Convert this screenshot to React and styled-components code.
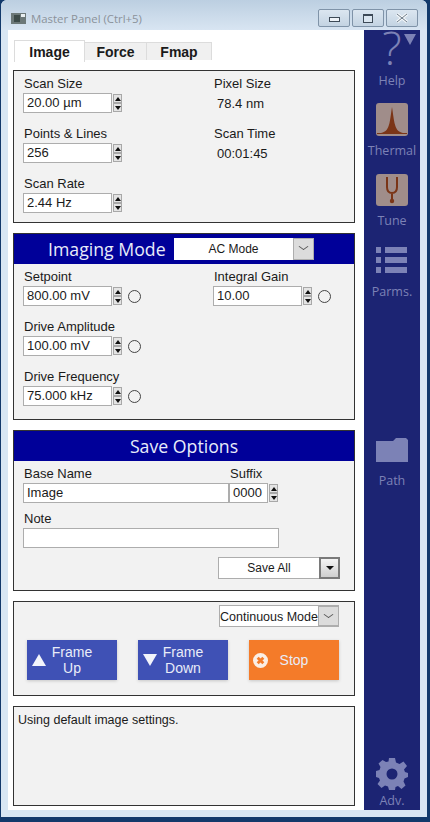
import React from 'react'
import styled, { createGlobalStyle } from 'styled-components'

const GlobalStyle = createGlobalStyle`
    html, body {
        margin: 0;
        padding: 0;
        height: 822px;
        overflow: hidden;
        background: #12396b;
    }
    body {
        font-family: "Liberation Sans", Arial, sans-serif;
        font-size: 13px;
        color: #1a1a1a;
    }
`

const SIDE = '#7c82b6'

const Frame = () => (
    <Win>
        <TitleBar>
            <AppIcon viewBox="0 0 15 11">
                <rect width="15" height="11" fill="#6c7878" />
                <rect x="3" y="2" width="6" height="7" fill="#3c4a48" />
                <rect x="10" y="1" width="4" height="3" fill="#e8eef0" />
            </AppIcon>
            <TitleText>Master Panel (Ctrl+5)</TitleText>
            <WinButtons>
                <WinButton><MinGlyph /></WinButton>
                <WinButton><MaxGlyph /></WinButton>
                <WinButton><CloseIcon viewBox="0 0 14 10"><path d="M2 1 L12 9 M12 1 L2 9" stroke="#f4f7fa" strokeWidth="3" /><path d="M2 1 L12 9 M12 1 L2 9" stroke="#6f7d89" strokeWidth="1" /></CloseIcon></WinButton>
            </WinButtons>
        </TitleBar>
        <Body>
            <Main>
                <Tabs>
                    <Tab $active>Image</Tab>
                    <Tab $w={62}>Force</Tab>
                    <Tab $w={65}>Fmap</Tab>
                </Tabs>
                <ScanPanel>
                    <Columns>
                        <Column>
                            <NumberField label="Scan Size" value="20.00 µm" />
                            <NumberField label="Points &amp; Lines" value="256" />
                            <NumberField label="Scan Rate" value="2.44 Hz" />
                        </Column>
                        <Column>
                            <ReadOut label="Pixel Size" value="78.4 nm" />
                            <ReadOut label="Scan Time" value="00:01:45" />
                        </Column>
                    </Columns>
                </ScanPanel>
                <ModePanel>
                    <PanelHeader>
                        <HeaderTitle>Imaging Mode</HeaderTitle>
                        <ModeSelect>
                            <SelectText>AC Mode</SelectText>
                            <Chevron />
                        </ModeSelect>
                    </PanelHeader>
                    <ModeBody>
                        <Column>
                            <NumberField label="Setpoint" value="800.00 mV" radio />
                            <NumberField label="Drive Amplitude" value="100.00 mV" radio />
                            <NumberField label="Drive Frequency" value="75.000 kHz" radio />
                        </Column>
                        <Column>
                            <NumberField label="Integral Gain" value="10.00" radio />
                        </Column>
                    </ModeBody>
                </ModePanel>
                <SavePanel>
                    <PanelHeader $center>
                        <HeaderTitle>Save Options</HeaderTitle>
                    </PanelHeader>
                    <SaveBody>
                        <BaseRow>
                            <Field>
                                <Label>Base Name</Label>
                                <ValueBox $w={206}>Image</ValueBox>
                            </Field>
                            <Field>
                                <Label>Suffix</Label>
                                <FieldRow>
                                    <ValueBox $w={39}>0000</ValueBox>
                                    <Spinner />
                                </FieldRow>
                            </Field>
                        </BaseRow>
                        <Field>
                            <NoteLabel>Note</NoteLabel>
                            <ValueBox $w={256} />
                        </Field>
                        <SaveAll>
                            <SaveText>Save All</SaveText>
                            <DropButton><DropArrow /></DropButton>
                        </SaveAll>
                    </SaveBody>
                </SavePanel>
                <ActionPanel>
                    <ContinuousSelect>
                        <SelectText $size={12.5}>Continuous Mode</SelectText>
                        <Chevron />
                    </ContinuousSelect>
                    <ActionRow>
                        <ActionButton>
                            <Triangle viewBox="0 0 14 12"><path d="M7 0 L14 12 L0 12 Z" fill="#f2f4fb" /></Triangle>
                            <span>Frame<br />Up</span>
                        </ActionButton>
                        <ActionButton>
                            <Triangle viewBox="0 0 14 12"><path d="M0 0 L14 0 L7 12 Z" fill="#f2f4fb" /></Triangle>
                            <span>Frame<br />Down</span>
                        </ActionButton>
                        <ActionButton $stop>
                            <StopIcon viewBox="0 0 16 16">
                                <circle cx="8" cy="8" r="8" fill="#fbeee4" />
                                <path d="M5 5 L11 11 M11 5 L5 11" stroke="#f47b29" strokeWidth="3" />
                            </StopIcon>
                            <span>Stop</span>
                        </ActionButton>
                    </ActionRow>
                </ActionPanel>
                <MessagePanel>Using default image settings.</MessagePanel>
            </Main>
            <Sidebar>
                <HelpItem>
                    <HelpMark>?</HelpMark>
                    <HelpArrow />
                </HelpItem>
                <SideLabel>Help</SideLabel>
                <IconTile>
                    <svg viewBox="0 0 32 33" width="32" height="33">
                        <path d="M5 30 C10 29 12 26 13.5 20 C14.5 15 15.3 8 16 4 C16.7 8 17.5 15 18.5 20 C20 26 22 29 27 30 Z" fill="#7b3517" />
                        <rect x="1" y="30" width="30" height="1" fill="#7b3517" />
                    </svg>
                </IconTile>
                <SideLabel $mt={4}>Thermal</SideLabel>
                <IconTile $mt={14} $h={32}>
                    <svg viewBox="0 0 32 32" width="32" height="32">
                        <path d="M11 3 V13 C11 17 13 19 16 19 C19 19 21 17 21 13 V3 M16 19 V26" fill="none" stroke="#7b3517" strokeWidth="2" />
                        <circle cx="16" cy="27" r="2.2" fill="#7b3517" />
                    </svg>
                </IconTile>
                <SideLabel $mt={4}>Tune</SideLabel>
                <SvgIcon $mt={17} viewBox="0 0 32 27" width="32" height="27">
                    <g fill={SIDE}>
                        <rect x="0" y="0" width="5" height="6" />
                        <rect x="9" y="0" width="22" height="6" />
                        <rect x="0" y="10" width="5" height="6" />
                        <rect x="9" y="10" width="22" height="6" />
                        <rect x="0" y="20" width="5" height="6" />
                        <rect x="9" y="20" width="22" height="6" />
                    </g>
                </SvgIcon>
                <SideLabel $mt={7}>Parms.</SideLabel>
                <SvgIcon $mt={137} viewBox="0 0 32 24" width="32" height="24">
                    <path d="M0 3 H17 L20 0 H30 L32 2 V24 H0 Z" fill={SIDE} />
                </SvgIcon>
                <SideLabel $mt={8}>Path</SideLabel>
                <Spacer />
                <SvgIcon viewBox="0 0 32 32" width="32" height="32">
                    <path fillRule="evenodd" fill={SIDE} d="M13 0 H19 L20 4.5 L23.5 6 L27.5 3.5 L31 8 L28 11.5 L29 14 L32 15 V19 L28.5 20.5 L27.5 23.5 L29.5 27.5 L25.5 31 L22 28 L19.5 29 L19 32 H13 L12 28.5 L9 27.5 L5.5 30 L1.5 26 L4 22.5 L3 20 L0 19 V13 L3.5 12 L4.5 9 L2.5 5.5 L6.5 2 L10 4 L12.5 3.5 Z M16 10.5 A5.5 5.5 0 1 0 16 21.5 A5.5 5.5 0 1 0 16 10.5 Z" />
                </SvgIcon>
                <SideLabel>Adv.</SideLabel>
            </Sidebar>
        </Body>
    </Win>
)

function NumberField({ label, value, radio }) {
    return (
        <Field>
            <Label>{label}</Label>
            <FieldRow>
                <ValueBox>{value}</ValueBox>
                <Spinner />
                {radio && <Radio />}
            </FieldRow>
        </Field>
    )
}

function ReadOut({ label, value }) {
    return (
        <Field>
            <Label>{label}</Label>
            <ReadValue>{value}</ReadValue>
        </Field>
    )
}

function Spinner() {
    return (
        <SpinBox>
            <SpinHalf><SpinUp /></SpinHalf>
            <SpinHalf><SpinDown /></SpinHalf>
        </SpinBox>
    )
}

export default function App() {
    return (
        <>
            <GlobalStyle />
            <Frame />
        </>
    )
}

// Window chrome
const Win = styled.div`
    margin-left: 1px;
    width: 426px;
    height: 817px;
    background: #d8e6f3;
    border-radius: 6px 6px 0 0;
    display: flex;
    flex-direction: column;
`

const TitleBar = styled.div`
    height: 30px;
    flex: none;
    display: flex;
    align-items: center;
    padding-left: 10px;
    background: linear-gradient(#bccfe1, #d8e5f2);
    border-radius: 6px 6px 0 0;
`

const AppIcon = styled.svg`
    width: 15px;
    height: 11px;
    margin-top: 7px;
`

const TitleText = styled.div`
    margin: 7px 0 0 5px;
    font-family: "Open Sans", sans-serif;
    font-size: 11.4px;
    color: #8b929a;
`

const WinButtons = styled.div`
    margin-left: auto;
    margin-right: 9px;
    margin-top: 6px;
    display: flex;
    gap: 2px;
`

const WinButton = styled.div`
    width: 32px;
    height: 18px;
    border: 1px solid #7f93a8;
    box-sizing: border-box;
    border-radius: 2px;
    background: linear-gradient(#dbe6f0, #c3d3e2);
    display: flex;
    align-items: center;
    justify-content: center;
`

const MinGlyph = styled.div`
    width: 9px;
    height: 3px;
    margin-top: 3px;
    border: 1px solid #3d4a57;
    background: #eef3f8;
`

const MaxGlyph = styled.div`
    width: 8px;
    height: 6px;
    border: 1px solid #3d4a57;
    border-top-width: 2px;
    background: #dbe6f0;
`

const CloseIcon = styled.svg`
    width: 14px;
    height: 10px;
`

const Body = styled.div`
    margin: 0 7px 7px 7px;
    flex: 1;
    min-height: 0;
    display: flex;
`

const Main = styled.div`
    width: 356px;
    background: #fff;
    padding: 10px 9px 0 5px;
    box-sizing: border-box;
`

// Tabs
const Tabs = styled.div`
    display: flex;
    height: 22px;
    align-items: center;
    padding-left: 1px;
`

const Tab = styled.div`
    box-sizing: border-box;
    width: ${p => (p.$active ? 71 : p.$w)}px;
    height: ${p => (p.$active ? 22 : 18)}px;
    display: flex;
    align-items: center;
    justify-content: center;
    font-weight: bold;
    font-size: 14px;
    background: ${p => (p.$active ? '#fff' : '#f0f0f0')};
    border: 1px solid #dcdcdc;
    border-bottom: none;
    border-left-width: ${p => (p.$active ? 1 : 0)}px;
`

// Panels
const Panel = styled.div`
    box-sizing: border-box;
    width: 342px;
    border: 1px solid #333;
    background: #f2f2f2;
`

const ScanPanel = styled(Panel)`
    margin-top: 8px;
    height: 153px;
    padding: 2px 9px;
`

const ModePanel = styled(Panel)`
    margin-top: 10px;
    height: 187px;
`

const SavePanel = styled(Panel)`
    margin-top: 10px;
    height: 161px;
`

const ActionPanel = styled(Panel)`
    margin-top: 10px;
    height: 95px;
    padding: 3px 15px 0 13px;
`

const MessagePanel = styled(Panel)`
    margin-top: 10px;
    height: 100px;
    padding: 6px 4px;
    font-size: 12.5px;
`

const PanelHeader = styled.div`
    height: 30px;
    background: #000099;
    display: flex;
    align-items: center;
    justify-content: ${p => (p.$center ? 'center' : 'flex-start')};
    padding-left: ${p => (p.$center ? 0 : 34)}px;
`

const HeaderTitle = styled.div`
    font-family: "Open Sans", sans-serif;
    font-size: 17.7px;
    color: #e8ecfa;
`

const ModeSelect = styled.div`
    margin-left: auto;
    margin-right: 40px;
    width: 140px;
    height: 22px;
    background: #fff;
    display: flex;
    align-items: stretch;
`

const SelectText = styled.div`
    flex: 1;
    font-size: ${p => p.$size || 12}px;
    text-align: center;
    line-height: 22px;
    white-space: nowrap;
`

const Chevron = styled.div`
    width: 21px;
    flex: none;
    box-sizing: border-box;
    border: 1px solid #adadad;
    background: #dcdcdc;
    position: relative;
    &::after {
        content: "";
        position: absolute;
        left: 6px;
        top: 4px;
        width: 6px;
        height: 6px;
        border-right: 1px solid #555;
        border-bottom: 1px solid #555;
        transform: scaleY(0.7) rotate(45deg);
    }
`

const Columns = styled.div`
    display: grid;
    grid-template-columns: 190px 1fr;
`

const ModeBody = styled(Columns)`
    padding: 2px 9px;
`

const Column = styled.div`
    display: flex;
    flex-direction: column;
    gap: 10px;
`

const Field = styled.div`
    display: flex;
    flex-direction: column;
`

const Label = styled.div`
    height: 20px;
    line-height: 22px;
    padding-left: 1px;
    white-space: nowrap;
`

const NoteLabel = styled(Label)`
    margin-top: 5px;
`

const FieldRow = styled.div`
    display: flex;
    align-items: center;
`

const ValueBox = styled.div`
    box-sizing: border-box;
    width: ${p => p.$w || 89}px;
    height: 20px;
    line-height: 18px;
    padding-left: 3px;
    background: #fff;
    border: 1px solid #adadad;
`

const ReadValue = styled.div`
    height: 20px;
    line-height: 22px;
    padding-left: 4px;
`

const SpinBox = styled.div`
    margin-left: 1px;
    width: 9px;
    height: 18px;
    display: flex;
    flex-direction: column;
`

const SpinHalf = styled.div`
    flex: 1;
    box-sizing: border-box;
    border: 1px solid #a8a8a8;
    background: #e4e4e4;
    display: flex;
    align-items: center;
    justify-content: center;
`

const SpinUp = styled.div`
    border-left: 3px solid transparent;
    border-right: 3px solid transparent;
    border-bottom: 4px solid #111;
`

const SpinDown = styled.div`
    border-left: 3px solid transparent;
    border-right: 3px solid transparent;
    border-top: 4px solid #111;
`

const Radio = styled.div`
    box-sizing: border-box;
    margin-left: 6px;
    width: 13px;
    height: 13px;
    border: 1px solid #444;
    border-radius: 50%;
`

const SaveBody = styled.div`
    padding: 2px 9px;
`

const BaseRow = styled.div`
    display: flex;
`

const SaveAll = styled.div`
    box-sizing: border-box;
    margin: 9px 0 0 195px;
    width: 122px;
    height: 22px;
    display: flex;
    background: #fff;
    border: 1px solid #adadad;
`

const SaveText = styled.div`
    flex: 1;
    text-align: center;
    font-size: 12px;
    line-height: 20px;
`

const DropButton = styled.div`
    box-sizing: border-box;
    width: 21px;
    margin: -1px -1px -1px 0;
    border: 2px solid #7a7a7a;
    background: linear-gradient(#f4f4f4, #cfcfcf);
    display: flex;
    align-items: center;
    justify-content: center;
`

const DropArrow = styled.div`
    border-left: 4px solid transparent;
    border-right: 4px solid transparent;
    border-top: 4px solid #111;
`

const ContinuousSelect = styled.div`
    box-sizing: border-box;
    margin-left: 192px;
    width: 120px;
    height: 22px;
    display: flex;
    background: #fff;
    border: 1px solid #adadad;
    line-height: 20px;
`

const ActionRow = styled.div`
    margin-top: 13px;
    display: flex;
    justify-content: space-between;
`

const ActionButton = styled.div`
    width: 90px;
    height: 40px;
    display: grid;
    grid-template-columns: 1fr auto 1fr;
    align-items: center;
    text-align: center;
    font-size: 14px;
    line-height: 16px;
    color: #e9ecf8;
    background: ${p => (p.$stop ? '#f47b29' : '#3f51b5')};
    box-shadow: 0 1px 3px rgba(0, 0, 0, 0.18);
`

const Triangle = styled.svg`
    width: 14px;
    height: 14px;
    margin-left: 5px;
`

const StopIcon = styled.svg`
    width: 15px;
    height: 15px;
    margin-left: 4px;
`

// Right hand toolbar
const Sidebar = styled.div`
    width: 56px;
    background: #1c2473;
    display: flex;
    flex-direction: column;
    align-items: center;
`

const HelpItem = styled.div`
    height: 40px;
    width: 100%;
    display: flex;
    justify-content: center;
    position: relative;
`

const HelpMark = styled.div`
    font-family: "Open Sans", sans-serif;
    font-weight: 300;
    font-size: 46px;
    line-height: 40px;
    height: 40px;
    margin-top: -3px;
    color: ${SIDE};
`

const HelpArrow = styled.div`
    position: absolute;
    right: 4px;
    top: 4px;
    border-left: 6px solid transparent;
    border-right: 6px solid transparent;
    border-top: 11px solid ${SIDE};
`

const SideLabel = styled.div`
    margin-top: ${p => p.$mt || 0}px;
    height: 20px;
    font-family: "Open Sans", sans-serif;
    font-size: 12.5px;
    line-height: 22px;
    color: ${SIDE};
`

const IconTile = styled.div`
    margin-top: ${p => p.$mt || 13}px;
    width: 32px;
    height: ${p => p.$h || 33}px;
    border-radius: 3px;
    background: #a08d8a;
    display: flex;
`

const SvgIcon = styled.svg`
    flex: none;
    margin-top: ${p => p.$mt || 0}px;
`

const Spacer = styled.div`
    flex: 1;
`
